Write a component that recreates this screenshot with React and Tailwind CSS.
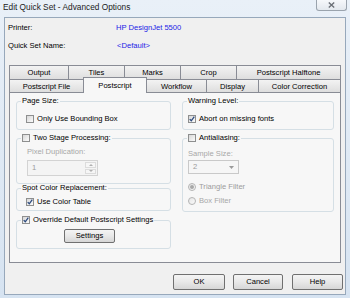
import React from "react";

function Check({ checked }) {
  return (
    <span className="w-[8px] h-[8px] border border-[#8e8f8f] bg-gradient-to-br from-[#d8d8d8] to-[#fbfbfb] flex items-center justify-center shrink-0">
      {checked && (
        <svg width="6" height="6" viewBox="0 0 6 6">
          <path d="M0.7 3.1 L2.3 4.8 L5.3 0.7" stroke="#2c4a7e" strokeWidth="1.3" fill="none" />
        </svg>
      )}
    </span>
  );
}

function Radio({ checked }) {
  return (
    <span className="w-[8px] h-[8px] rounded-full border border-[#b4b4b4] bg-gradient-to-br from-[#e6e6e6] to-[#fafafa] flex items-center justify-center shrink-0">
      {checked && <span className="w-[4px] h-[4px] rounded-full bg-[#a8a8a8]" />}
    </span>
  );
}

function Btn({ w, children }) {
  return (
    <div
      className={`${w} h-full border border-[#707070] rounded-[2px] bg-gradient-to-b from-[#f4f4f4] via-[#e8e8e8] to-[#d6d6d6] flex items-center justify-center`}
    >
      {children}
    </div>
  );
}

function Tab({ w, children }) {
  return (
    <div
      className={`${w} h-full -ml-px first:ml-0 border border-b-0 border-[#898c95] bg-gradient-to-b from-[#f3f3f3] to-[#dedede] flex items-center justify-center pt-[1px]`}
    >
      {children}
    </div>
  );
}

export default function App() {
  return (
    <div className="w-[350px] h-[298px] relative overflow-hidden bg-gradient-to-b from-[#e9f0f8] to-[#d6e3f1] text-[7.6px] text-black font-['Liberation_Sans',Arial,sans-serif] whitespace-nowrap">
      <div className="h-[17px] flex items-center pl-[3px] pb-[2px] text-[8.3px] text-[#1b1b1b]">
        Edit Quick Set - Advanced Options
      </div>
      <div className="absolute top-0 right-[3px] w-[31px] h-[11px] border border-t-0 border-[#9aa3ad] rounded-b-[3px] bg-gradient-to-b from-[#f6f8fb] to-[#e3e8ee] flex items-center justify-center">
        <svg width="7" height="6" viewBox="0 0 7 6">
          <path d="M0.8 0.6 L6.2 5.4 M6.2 0.6 L0.8 5.4" stroke="#6a6f76" strokeWidth="1.4" />
        </svg>
      </div>

      <div className="ml-[4px] w-[342px] h-[278px] border border-[#97a8bb] bg-[#f0f0f0] flex flex-col">
        <div className="pt-[5px] pl-[3px] flex flex-col gap-[8px]">
          <div className="flex h-[10px] items-center">
            <span className="w-[108px]">Printer:</span>
            <span className="text-[#2222e6]">HP DesignJet 5500</span>
          </div>
          <div className="flex h-[10px] items-center">
            <span className="w-[109px]">Quick Set Name:</span>
            <span className="text-[#2222e6]">&lt;Default&gt;</span>
          </div>
        </div>

        <div className="ml-[4px] mt-[14px] w-[332px] flex flex-col">
          <div className="flex h-[14px]">
            <Tab w="w-[60px]">Output</Tab>
            <Tab w="w-[57px]">Tiles</Tab>
            <Tab w="w-[57px]">Marks</Tab>
            <Tab w="w-[57px]">Crop</Tab>
            <Tab w="w-[105px]">Postscript Halftone</Tab>
          </div>
          <div className="flex h-[13px] items-end">
            <Tab w="w-[75px]">Postscript File</Tab>
            <div className="w-[64px] h-[16px] -ml-px -mb-px relative z-10 border border-b-0 border-[#898c95] bg-[#f7f7f7] flex items-start justify-center pt-[2px]">
              Postscript
            </div>
            <Tab w="w-[61px]">Workflow</Tab>
            <Tab w="w-[53px]">Display</Tab>
            <Tab w="w-[83px]">Color Correction</Tab>
          </div>
          <div className="h-[171px] border border-[#898c95] bg-[#f7f7f7] pt-[4px] pl-[6px] flex gap-[11px]">
            <div className="w-[155px] flex flex-col">
              <fieldset className="h-[33px] border border-[#d5dfe5] rounded-[3px] pl-[9px]">
                <legend className="-ml-[5px] px-[1px] leading-[8px]">Page Size:</legend>
                <div className="mt-[9px] h-[9px] flex items-center gap-[3px]">
                  <Check />
                  <span>Only Use Bounding Box</span>
                </div>
              </fieldset>

              <fieldset className="mt-[4px] h-[50px] border border-[#d5dfe5] rounded-[3px] pl-[10px]">
                <legend className="-ml-[6px] px-[1px] leading-[8px]">
                  <span className="flex items-center gap-[3px]">
                    <Check />
                    <span>Two Stage Processing:</span>
                  </span>
                </legend>
                <div className="mt-[6px] h-[8px] flex items-center text-[#a7a7a7]">Pixel Duplication:</div>
                <div className="mt-[4px] w-[71px] h-[16px] border border-[#d3d3d3] bg-[#f4f4f4] flex">
                  <span className="flex-1 flex items-center pl-[4px] text-[#9c9c9c]">1</span>
                  <span className="w-[11px] my-[1px] mr-[1px] flex flex-col gap-px">
                    <span className="flex-1 border border-[#dcdcdc] bg-[#f6f6f6] flex items-center justify-center">
                      <svg width="4" height="2" viewBox="0 0 4 2"><path d="M0 2 L2 0 L4 2Z" fill="#b0b0b0" /></svg>
                    </span>
                    <span className="flex-1 border border-[#dcdcdc] bg-[#f6f6f6] flex items-center justify-center">
                      <svg width="4" height="2" viewBox="0 0 4 2"><path d="M0 0 L2 2 L4 0Z" fill="#b0b0b0" /></svg>
                    </span>
                  </span>
                </div>
              </fieldset>

              <fieldset className="h-[27px] border border-[#d5dfe5] rounded-[3px] pl-[9px]">
                <legend className="-ml-[5px] px-[1px] leading-[8px]">Spot Color Replacement:</legend>
                <div className="mt-[6px] h-[8px] flex items-center gap-[3px]">
                  <Check checked />
                  <span>Use Color Table</span>
                </div>
              </fieldset>

              <fieldset className="mt-[5px] h-[33px] border border-[#d5dfe5] rounded-[3px]">
                <legend className="ml-[4px] px-[1px] leading-[8px]">
                  <span className="flex items-center gap-[3px]">
                    <Check checked />
                    <span>Override Default Postscript Settings</span>
                  </span>
                </legend>
                <div className="mt-[5px] h-[14px] flex pl-[47px]">
                  <Btn w="w-[51px]">Settings</Btn>
                </div>
              </fieldset>
            </div>

            <div className="w-[152px] flex flex-col">
              <fieldset className="h-[33px] border border-[#d5dfe5] rounded-[3px] pl-[5px]">
                <legend className="ml-[-1px] px-[1px] leading-[8px]">Warning Level:</legend>
                <div className="mt-[9px] h-[9px] flex items-center gap-[3px]">
                  <Check checked />
                  <span>Abort on missing fonts</span>
                </div>
              </fieldset>

              <fieldset className="mt-[4px] h-[78px] border border-[#d5dfe5] rounded-[3px] pl-[5px]">
                <legend className="ml-[-1px] px-[1px] leading-[8px]">
                  <span className="flex items-center gap-[3px]">
                    <Check />
                    <span>Antialiasing:</span>
                  </span>
                </legend>
                <div className="mt-[8px] h-[8px] flex items-center text-[#a7a7a7]">Sample Size:</div>
                <div className="mt-[2px] w-[51px] h-[14px] border border-[#c9c9c9] bg-[#f6f6f6] flex">
                  <span className="flex-1 flex items-center pl-[4px] text-[#9c9c9c]">2</span>
                  <span className="w-[13px] flex items-center justify-center">
                    <svg width="5" height="3" viewBox="0 0 5 3"><path d="M0 0 L2.5 3 L5 0Z" fill="#9a9a9a" /></svg>
                  </span>
                </div>
                <div className="mt-[9px] h-[8px] flex items-center gap-[3px] text-[#9c9c9c]">
                  <Radio checked />
                  <span>Triangle Filter</span>
                </div>
                <div className="mt-[6px] h-[8px] flex items-center gap-[3px] text-[#a7a7a7]">
                  <Radio />
                  <span>Box Filter</span>
                </div>
              </fieldset>
            </div>
          </div>
        </div>

        <div className="mt-[11px] h-[16px] flex justify-end pr-[2px]">
          <Btn w="w-[52px]">OK</Btn>
          <div className="w-[8px]" />
          <Btn w="w-[50px]">Cancel</Btn>
          <div className="w-[9px]" />
          <Btn w="w-[51px]">Help</Btn>
        </div>
      </div>
    </div>
  );
}
